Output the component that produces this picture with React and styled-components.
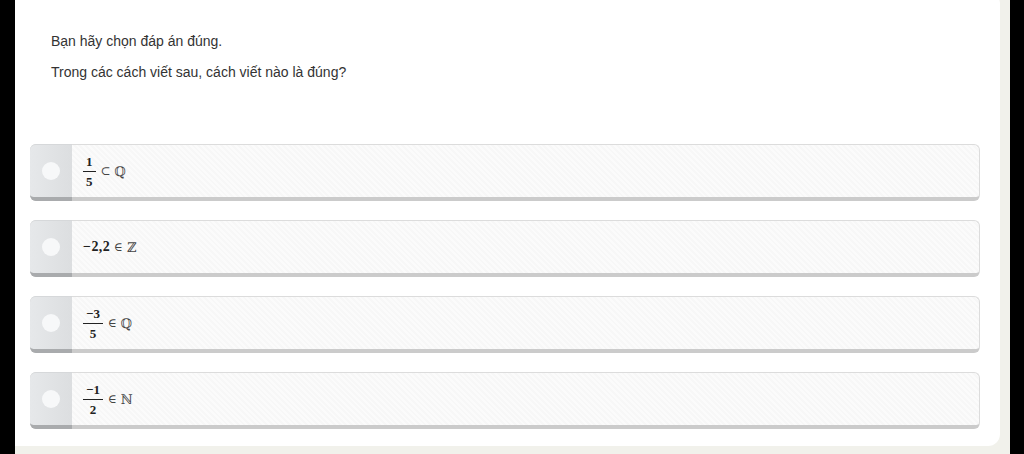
import React from 'react';
import styled, { createGlobalStyle } from 'styled-components';

const GlobalStyle = createGlobalStyle`
  html, body {
    margin: 0;
    padding: 0;
    background: #000;
    overflow: hidden;
  }
  * { box-sizing: border-box; }
`

const Screen = styled.div`
  width: 1024px;
  height: 454px;
  background: #000;
  padding: 0 14px 0 15px;
  overflow: hidden;
`

const Panel = styled.div`
  display: flow-root;
  height: 100%;
  background: #f1f1eb;
  padding: 0 10px 8px 0;
`

const Card = styled.div`
  height: calc(100% + 8px);
  margin-top: -8px;
  background: #fff;
  border-radius: 0 12px 12px 0;
  padding: 40px 20px 0 15px;
`

const Prompt = styled.p`
  margin: 0 0 13px 21px;
  font-family: "Liberation Sans", Arial, sans-serif;
  font-size: 14px;
  line-height: 18px;
  color: #333;
`

const Options = styled.div`
  display: flex;
  flex-direction: column;
  gap: 19px;
  margin-top: 63px;
`

const Option = styled.div`
  display: flex;
  align-items: stretch;
  height: 57px;
  border: 1px solid #dcdcdc;
  border-bottom: 4px solid #cbcbcb;
  border-radius: 6px;
  background: repeating-linear-gradient(45deg, #fbfbfb 0 2px, #f7f7f7 2px 4px);
`

const Marker = styled.div`
  width: 42px;
  margin: -1px 0 -4px -1px;
  border-top: 1px solid #d6d8da;
  border-bottom: 4px solid #a9abad;
  border-radius: 6px 0 0 6px;
  background: linear-gradient(90deg, #e6e8ea, #dcdee0);
  display: flex;
  align-items: center;
  justify-content: center;
`

const Dot = styled.span`
  width: 18px;
  height: 18px;
  border-radius: 50%;
  background: #f7f8f9;
`

const Math = styled.div`
  display: flex;
  align-items: center;
  gap: 4px;
  padding-left: 11px;
  font-family: "Liberation Serif", "DejaVu Serif", serif;
  font-size: 14px;
  color: #222;
`

const Frac = styled.span`
  display: inline-flex;
  flex-direction: column;
  align-items: center;
  font-weight: 700;
  font-size: 13px;
  line-height: 13px;
  margin-right: 1px;
`

const Num = styled.span`
  padding: 0 3px 3px;
  border-bottom: 1px solid #222;
  align-self: stretch;
  text-align: center;
`

const Den = styled.span`
  padding-top: 3px;
`

const Bold = styled.span`
  font-weight: 700;
  letter-spacing: 0.4px;
`

const Sym = styled.span`
  font-family: "DejaVu Serif", serif;
  font-size: ${p => p.small ? '12px' : '13px'};
  color: #444;
`

const items = [
  <><Frac><Num>1</Num><Den>5</Den></Frac><Sym small>⊂</Sym><Sym>ℚ</Sym></>,
  <><Bold>−2,2</Bold><Sym small>∈</Sym><Sym>ℤ</Sym></>,
  <><Frac><Num>−3</Num><Den>5</Den></Frac><Sym small>∈</Sym><Sym>ℚ</Sym></>,
  <><Frac><Num>−1</Num><Den>2</Den></Frac><Sym small>∈</Sym><Sym>ℕ</Sym></>,
];

export default function App() {
  return (
    <Screen>
      <GlobalStyle />
      <Panel>
        <Card>
          <Prompt>Bạn hãy chọn đáp án đúng.</Prompt>
          <Prompt>Trong các cách viết sau, cách viết nào là đúng?</Prompt>
          <Options>
            {items.map((m, i) => (
              <Option key={i}>
                <Marker><Dot /></Marker>
                <Math>{m}</Math>
              </Option>
            ))}
          </Options>
        </Card>
      </Panel>
    </Screen>
  );
}
